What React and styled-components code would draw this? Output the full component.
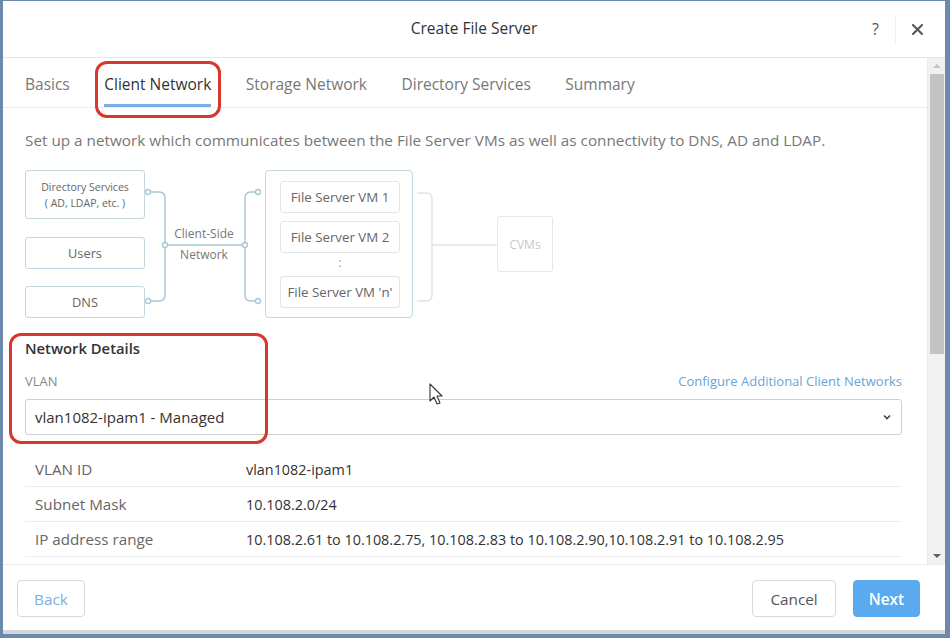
import React from 'react'
import styled, { createGlobalStyle } from 'styled-components'

const GlobalStyle = createGlobalStyle`
    * { box-sizing: border-box; }
    body {
        margin: 0;
        font-family: "Open Sans", "Liberation Sans", sans-serif;
        color: #333;
    }
`

const Screen = styled.div`
    position: relative;
    width: 950px;
    height: 638px;
    background: #6b89ad;
    padding: 1px 5px 4px 3px;
    overflow: hidden;
`

const Dialog = styled.div`
    height: 100%;
    background: #fff;
    display: flex;
    flex-direction: column;
    border-bottom: 4px solid #d3d6da;
`

const Header = styled.div`
    height: 57px;
    flex-shrink: 0;
    display: flex;
    align-items: center;
    justify-content: center;
    position: relative;
    border-bottom: 1px solid #e6e6e6;
`

const Title = styled.div`
    font-size: 15.5px;
    color: #333;
    margin-top: -2px;
`

const HeaderActions = styled.div`
    position: absolute;
    right: 22px;
    top: 0;
    height: 100%;
    display: flex;
    align-items: center;
`

const HelpIcon = styled.span`
    font-size: 16px;
    font-weight: 500;
    color: #555;
    padding: 0 16px 0 0;
    border-right: 1px solid #eee;
    line-height: 28px;
`

const CloseIcon = styled.span`
    display: flex;
    padding-left: 16px;
`

const Body = styled.div`
    flex: 1;
    display: flex;
    min-height: 0;
`

const Content = styled.div`
    flex: 1;
    overflow: hidden;
`

const Tabs = styled.div`
    display: flex;
    gap: 34.5px;
    padding: 0 22px;
    height: 50px;
    border-bottom: 1px solid #ececec;
`

const Tab = styled.div`
    display: flex;
    align-items: center;
    font-size: 15.5px;
    color: ${p => (p.active ? '#333' : '#777')};
    border-bottom: 3px solid ${p => (p.active ? '#7aaee0' : 'transparent')};
    padding-top: 5px;
`

const Section = styled.div`
    padding: 22px 25px 0 22px;
`

const Description = styled.p`
    margin: 0 0 20px 0;
    font-size: 15.3px;
    color: #777;
    white-space: nowrap;
`

const Diagram = styled.div`
    display: flex;
    align-items: center;
    height: 148px;
`

const SourceCol = styled.div`
    width: 120px;
    height: 148px;
    display: flex;
    flex-direction: column;
    justify-content: space-between;
`

const NodeBox = styled.div`
    height: ${p => p.h}px;
    border: 1px solid #c4d6de;
    border-radius: 3px;
    display: flex;
    flex-direction: column;
    align-items: center;
    justify-content: center;
    font-size: ${p => (p.small ? '10.5px' : '12.8px')};
    line-height: 16px;
    color: #666;
    background: #fff;
`

const Connector = styled.div`
    position: relative;
    width: 120px;
    height: 148px;
    display: flex;
    flex-direction: column;
    align-items: center;
    justify-content: center;
    gap: 4px;
    padding-right: 2px;
`

const ConnectorSvg = styled.svg`
    position: absolute;
    inset: 0;
`

const ConnectorLabel = styled.span`
    position: relative;
    font-size: 12px;
    color: #777;
    line-height: 17px;
`

const VmGroup = styled.div`
    width: 148px;
    height: 148px;
    border: 1px solid #c4d6de;
    border-radius: 4px;
    padding: 10px 12px 9px 14px;
    display: flex;
    flex-direction: column;
    justify-content: space-between;
`

const VmBox = styled.div`
    height: 32px;
    border: 1px solid #e0e6ea;
    border-radius: 3px;
    display: flex;
    align-items: center;
    justify-content: center;
    font-size: 13.3px;
    color: #666;
    white-space: nowrap;
`

const VmDots = styled.div`
    text-align: center;
    font-size: 12px;
    line-height: 10px;
    color: #999;
    margin-top: -4px;
`

const CvmBracket = styled.svg`
    width: 84px;
    height: 148px;
    flex-shrink: 0;
`

const CvmBox = styled.div`
    width: 56px;
    height: 56px;
    border: 1px solid #e8e8e8;
    border-radius: 3px;
    display: flex;
    align-items: center;
    justify-content: center;
    font-size: 12px;
    color: #c8c8c8;
`

const SectionTitle = styled.div`
    margin-top: 20px;
    font-size: 14.8px;
    font-weight: 600;
    color: #333;
`

const FieldHead = styled.div`
    display: flex;
    justify-content: space-between;
    align-items: center;
    margin-top: 14px;
`

const FieldLabel = styled.span`
    font-size: 13px;
    color: #888;
`

const Link = styled.span`
    font-size: 13px;
    color: #6aa3d6;
`

const Select = styled.div`
    margin-top: 9px;
    height: 36px;
    border: 1px solid #d0d0d0;
    border-radius: 3px;
    display: flex;
    align-items: center;
    justify-content: space-between;
    padding: 0 10px 0 9px;
    font-size: 15px;
    color: #333;
`

const Rows = styled.div`
    margin-top: 17px;
`

const Row = styled.div`
    display: flex;
    align-items: center;
    height: 35px;
    border-bottom: 1px solid #eeeeee;
`

const RowLabel = styled.span`
    width: 221px;
    padding-left: 10px;
    font-size: 15.2px;
    color: #666;
`

const RowValue = styled.span`
    font-size: 14.4px;
    color: #333;
`

const Scrollbar = styled.div`
    width: 18px;
    background: #f1f1f1;
    display: flex;
    flex-direction: column;
    align-items: center;
    padding: 6px 0 6px;
    border-left: 1px solid #e9e9e9;
`

const ScrollArrow = styled.div`
    width: 0;
    height: 0;
    border-left: 4px solid transparent;
    border-right: 4px solid transparent;
    ${p => (p.up
        ? 'border-bottom: 4px solid #c4c4c4;'
        : 'border-top: 4px solid #606060;')}
`

const ScrollThumb = styled.div`
    width: 14px;
    height: 280px;
    margin-top: 6px;
    background: #c3c3c3;
`

const ScrollSpacer = styled.div`
    flex: 1;
`

const Footer = styled.div`
    height: 66px;
    flex-shrink: 0;
    display: flex;
    align-items: center;
    padding: 2px 25px 0 14px;
    gap: 17px;
    border-top: 1px solid #ececec;
`

const Button = styled.button`
    height: 37px;
    padding: 0 ${p => p.pad}px;
    border-radius: 4px;
    font-family: inherit;
    font-size: 15.3px;
    font-weight: ${p => (p.primary ? 600 : 400)};
    border: 1px solid ${p => (p.primary ? '#5aaaf0' : '#d8d8d8')};
    background: ${p => (p.primary ? '#5aaaf0' : '#fff')};
    color: ${p => (p.primary ? '#fff' : p.link ? '#7aafdf' : '#555')};
    margin-left: ${p => (p.push ? 'auto' : '0')};
`

const Highlight = styled.div`
    position: absolute;
    border: 3px solid #d9372c;
    border-radius: 12px;
    pointer-events: none;
`

const Cursor = styled.svg`
    position: absolute;
    left: 429px;
    top: 383px;
`

const details = [
    ['VLAN ID', 'vlan1082-ipam1'],
    ['Subnet Mask', '10.108.2.0/24'],
    ['IP address range', '10.108.2.61 to 10.108.2.75, 10.108.2.83 to 10.108.2.90,10.108.2.91 to 10.108.2.95'],
]

const tabs = ['Basics', 'Client Network', 'Storage Network', 'Directory Services', 'Summary']

const line = '#a5c6d4'

const App = () => {
    return (
        <Screen>
            <GlobalStyle />
            <Dialog>
                <Header>
                    <Title>Create File Server</Title>
                    <HeaderActions>
                        <HelpIcon>?</HelpIcon>
                        <CloseIcon>
                            <svg width="11" height="11" viewBox="0 0 11 11">
                                <path d="M1 1 L10 10 M10 1 L1 10" stroke="#555" strokeWidth="2" strokeLinecap="round" />
                            </svg>
                        </CloseIcon>
                    </HeaderActions>
                </Header>
                <Body>
                    <Content>
                        <Tabs>
                            {tabs.map(t => (
                                <Tab key={t} active={t === 'Client Network'}>{t}</Tab>
                            ))}
                        </Tabs>
                        <Section>
                            <Description>
                                Set up a network which communicates between the File Server VMs as well as connectivity to DNS, AD and LDAP.
                            </Description>
                            <Diagram>
                                <SourceCol>
                                    <NodeBox h={49} small>
                                        <span>Directory Services</span>
                                        <span>( AD, LDAP, etc. )</span>
                                    </NodeBox>
                                    <NodeBox h={32}>Users</NodeBox>
                                    <NodeBox h={32}>DNS</NodeBox>
                                </SourceCol>
                                <Connector>
                                    <ConnectorSvg width="120" height="148" viewBox="0 0 120 148">
                                        <g fill="none" stroke={line} strokeWidth="1.4">
                                            <path d="M5.5 22 H14 Q20 22 20 28 V125 Q20 131 14 131 H5.5" />
                                            <path d="M20 75 H100" />
                                            <path d="M110.5 22 H106 Q100 22 100 28 V125 Q100 131 106 131 H110.5" />
                                        </g>
                                        <g fill="#fff" stroke={line} strokeWidth="1.3">
                                            <circle cx="3" cy="22" r="2.5" />
                                            <circle cx="3" cy="131" r="2.5" />
                                            <circle cx="20" cy="75" r="2.5" />
                                            <circle cx="100" cy="75" r="2.5" />
                                            <circle cx="113" cy="22" r="2.5" />
                                            <circle cx="113" cy="131" r="2.5" />
                                        </g>
                                    </ConnectorSvg>
                                    <ConnectorLabel>Client-Side</ConnectorLabel>
                                    <ConnectorLabel>Network</ConnectorLabel>
                                </Connector>
                                <VmGroup>
                                    <VmBox>File Server VM 1</VmBox>
                                    <VmBox>File Server VM 2</VmBox>
                                    <VmDots>:</VmDots>
                                    <VmBox>File Server VM 'n'</VmBox>
                                </VmGroup>
                                <CvmBracket viewBox="0 0 84 148">
                                    <g fill="none" stroke="#e2e2e2" strokeWidth="1.4">
                                        <path d="M4 23 H13 Q19 23 19 29 V125 Q19 131 13 131 H4" />
                                        <path d="M19 75 H84" />
                                    </g>
                                </CvmBracket>
                                <CvmBox>CVMs</CvmBox>
                            </Diagram>
                            <SectionTitle>Network Details</SectionTitle>
                            <FieldHead>
                                <FieldLabel>VLAN</FieldLabel>
                                <Link>Configure Additional Client Networks</Link>
                            </FieldHead>
                            <Select>
                                <span>vlan1082-ipam1 - Managed</span>
                                <svg width="8" height="6" viewBox="0 0 8 6">
                                    <path d="M1 1.5 L4 4.5 L7 1.5" fill="none" stroke="#444" strokeWidth="1.6" />
                                </svg>
                            </Select>
                            <Rows>
                                {details.map(([label, value]) => (
                                    <Row key={label}>
                                        <RowLabel>{label}</RowLabel>
                                        <RowValue>{value}</RowValue>
                                    </Row>
                                ))}
                            </Rows>
                        </Section>
                    </Content>
                    <Scrollbar>
                        <ScrollArrow up />
                        <ScrollThumb />
                        <ScrollSpacer />
                        <ScrollArrow />
                    </Scrollbar>
                </Body>
                <Footer>
                    <Button link pad={16}>Back</Button>
                    <Button push pad={17}>Cancel</Button>
                    <Button primary pad={15}>Next</Button>
                </Footer>
            </Dialog>
            <Highlight style={{ left: 95, top: 61, width: 126, height: 57 }} />
            <Highlight style={{ left: 9, top: 333, width: 259, height: 111 }} />
            <Cursor width="16" height="24" viewBox="0 0 16 24">
                <path d="M1 1 V18 L5 14 L8 21 L11 20 L8 13 H13 Z" fill="#fff" stroke="#333" strokeWidth="1.1" strokeLinejoin="round" />
            </Cursor>
        </Screen>
    )
}

export default App
